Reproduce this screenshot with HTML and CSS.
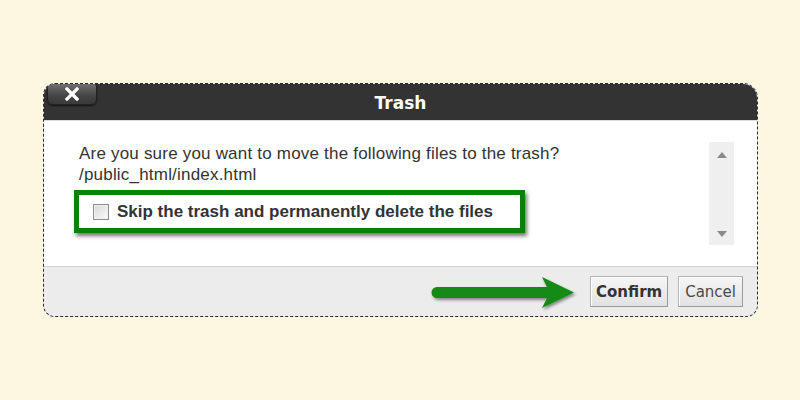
FILE: index.html
```html
<!DOCTYPE html>
<html>
<head>
<meta charset="utf-8">
<link rel="stylesheet" href="styles.css">
</head>
<body>
<div class="page">
  <div class="dialog">
    <div class="titlebar">
      <div class="close"><svg width="14" height="14" viewBox="0 0 14 14"><path d="M2 2 L12 12 M12 2 L2 12" stroke="#fff" stroke-width="3.2" stroke-linecap="square"/></svg></div>
      <span class="title">Trash</span>
    </div>
    <div class="content">
      <div class="main">
        <p class="msg">Are you sure you want to move the following files to the trash?<br>/public_html/index.html</p>
        <div class="highlight">
          <span class="check"></span>
          <span class="label">Skip the trash and permanently delete the files</span>
        </div>
      </div>
      <div class="scroll">
        <svg width="10" height="6" viewBox="0 0 10 6"><path d="M5 0 L10 6 L0 6 Z" fill="#8a8a8a"/></svg>
        <svg width="10" height="6" viewBox="0 0 10 6"><path d="M0 0 L10 0 L5 6 Z" fill="#8a8a8a"/></svg>
      </div>
    </div>
    <div class="footer">
      <svg class="arrow" width="150" height="38" viewBox="0 0 150 38">
        <defs>
          <filter id="sh" x="-10%" y="-30%" width="130%" height="170%">
            <feDropShadow dx="1.5" dy="2" stdDeviation="1.5" flood-color="#000" flood-opacity="0.45"/>
          </filter>
        </defs>
        <path d="M9 13 L119 13 L114 3 L146 18.5 L114 34 L119 24 L9 24 A5.5 5.5 0 0 1 9 13 Z" fill="#128a12" filter="url(#sh)"/>
      </svg>
      <button class="btn confirm">Confirm</button>
      <button class="btn cancel">Cancel</button>
    </div>
  </div>
</div>
</body>
</html>
```
FILE: styles.css
```css
html, body {
  margin: 0;
  padding: 0;
  background: #fdf6e1;
}
.page {
  width: 800px;
  height: 400px;
  padding: 83px 0 0 43px;
  box-sizing: border-box;
}
.dialog {
  width: 715px;
  height: 234px;
  box-sizing: border-box;
  border: 1px dashed #2a2a2a;
  border-radius: 12px 15px 12px 12px;
  overflow: hidden;
  background: #ececec;
  display: flex;
  flex-direction: column;
}
.titlebar {
  position: relative;
  height: 36px;
  flex: none;
  background: #333333;
  border-bottom: 1px solid #dcdcdc;
  display: flex;
  align-items: center;
  justify-content: center;
}
.title {
  font-family: "DejaVu Sans", Verdana, sans-serif;
  font-weight: bold;
  font-size: 17px;
  color: #ffffff;
  margin-top: 1px;
}
.close {
  position: absolute;
  left: 3px;
  top: -1px;
  width: 50px;
  height: 22px;
  box-sizing: border-box;
  border-radius: 3px 3px 6px 6px;
  background: linear-gradient(#6e6e6e, #444444 60%, #3a3a3a);
  border: 1px solid #222;
  box-shadow: 0 1px 2px rgba(0,0,0,0.6);
  display: flex;
  align-items: center;
  justify-content: center;
}
.content {
  height: 146px;
  flex: none;
  background: #ffffff;
  border-bottom: 1px solid #d2d2d2;
  display: flex;
  box-sizing: border-box;
}
.main {
  flex: 1;
  padding: 22px 0 0 30px;
}
.msg {
  margin: 0 0 0 5px;
  font-family: "Liberation Sans", Arial, sans-serif;
  font-size: 17px;
  line-height: 21px;
  letter-spacing: 0.2px;
  color: #333333;
}
.highlight {
  margin-top: 5px;
  width: 451px;
  height: 43px;
  box-sizing: border-box;
  border: 5px solid #0c7f0c;
  box-shadow: 2px 3px 4px rgba(0,0,0,0.55);
  display: flex;
  align-items: center;
  padding-left: 14px;
  gap: 8px;
}
.check {
  width: 16px;
  height: 16px;
  box-sizing: border-box;
  border: 1px solid #8e8e8e;
  background: linear-gradient(135deg, #d8d8d8, #fbfbfb);
  box-shadow: inset 0 0 0 1px #f0f0f0;
}
.label {
  font-family: "Liberation Sans", Arial, sans-serif;
  font-weight: bold;
  font-size: 17px;
  color: #333333;
}
.scroll {
  width: 25px;
  height: 103px;
  margin: 21px 23px 0 0;
  background: #efefef;
  display: flex;
  flex-direction: column;
  justify-content: space-between;
  align-items: center;
  padding: 10px 0 8px;
  box-sizing: border-box;
}
.footer {
  flex: 1;
  display: flex;
  align-items: center;
  justify-content: flex-end;
  padding: 0 14px 0 0;
  gap: 10px;
}
.arrow {
  margin-right: 2px;
  margin-top: 3px;
}
.btn {
  height: 31px;
  padding: 0 5px;
  font-family: "DejaVu Sans", Verdana, sans-serif;
  font-size: 15px;
  color: #3a3a3a;
  background: linear-gradient(#f6f6f6, #e2e2e2);
  border: 1px solid #b4b4b4;
  border-right-color: #9a9a9a;
  border-bottom-color: #9a9a9a;
  box-shadow: inset 1px 1px 0 #ffffff;
  border-radius: 1px;
}
.confirm {
  font-weight: bold;
  color: #333333;
}
.cancel {
  padding: 0 6px;
  color: #4a4a4a;
}
```
